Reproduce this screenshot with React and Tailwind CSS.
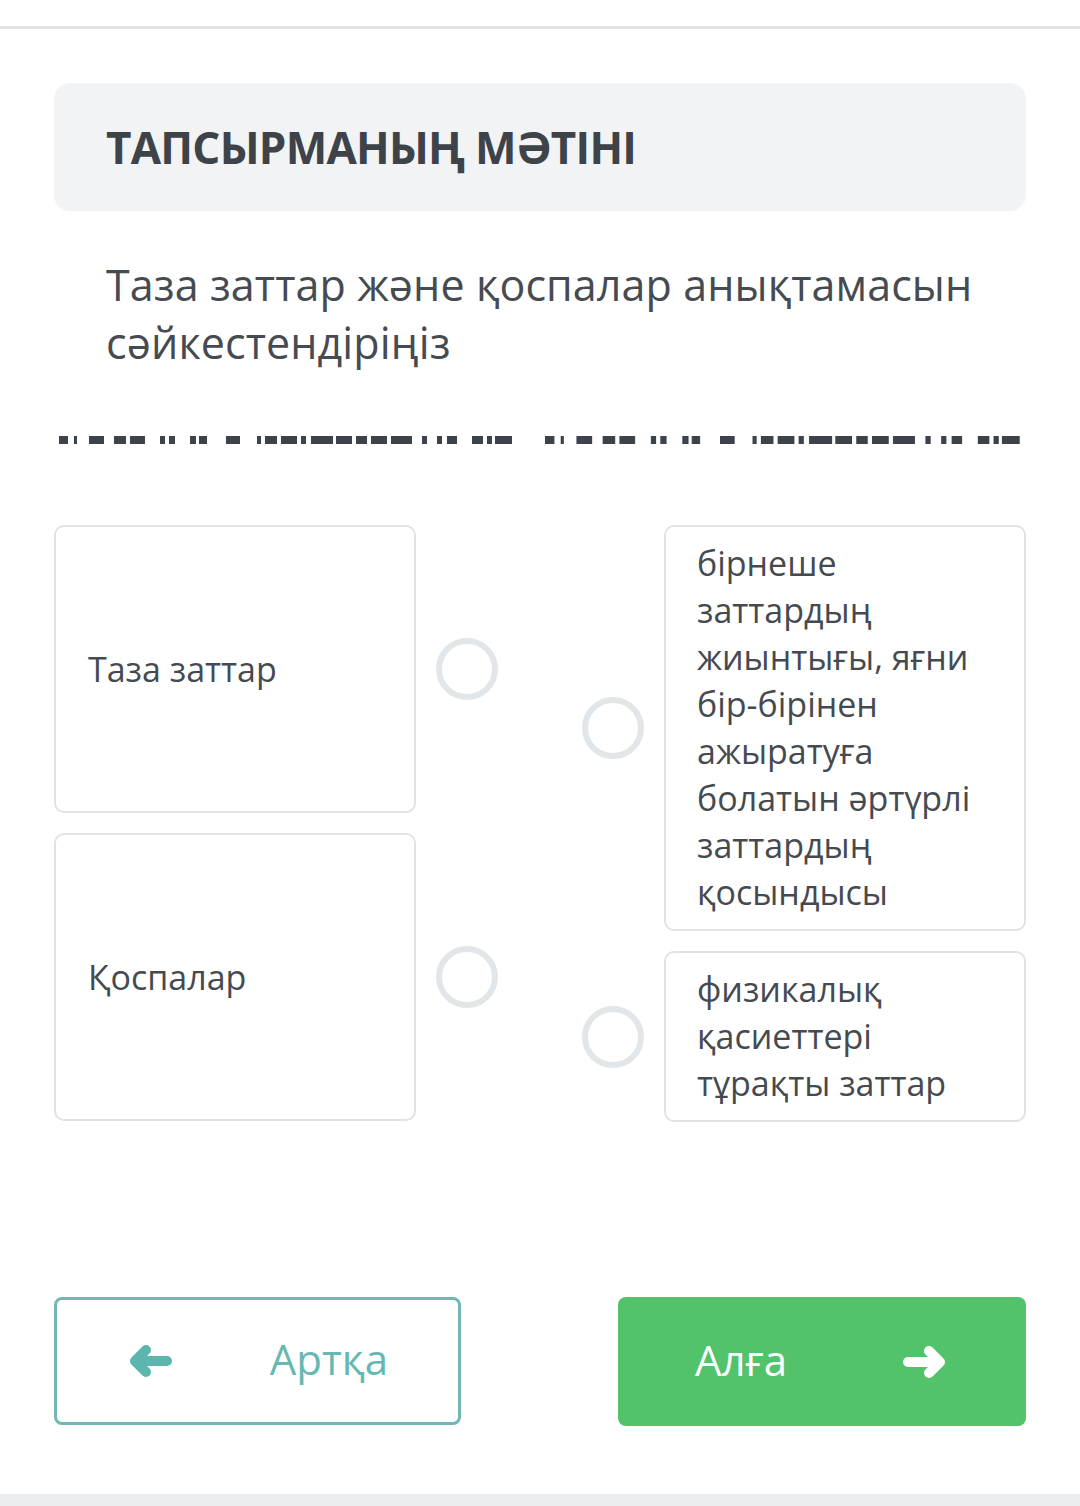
import React from 'react'

const dashes = [
  [59, 9], [74, 3], [89, 15], [114, 12], [130, 15], [160, 5], [169, 6], [190, 6], [199, 8],
  [226, 14], [257, 4], [265, 12], [281, 16], [301, 5], [311, 22], [336, 16], [356, 11],
  [371, 16], [391, 21], [422, 5], [437, 5], [447, 10], [472, 11], [487, 5], [495, 17],
]

function DashLine() {
  return (
    <svg width="1080" height="8" viewBox="0 0 1080 8" className="block">
      {dashes.map(([x, w], i) => (
        <rect key={'a' + i} x={x} y="0" width={w} height="8" fill="#3d434a" />
      ))}
      {dashes.map(([x, w], i) => (
        <rect key={'b' + i} x={545 + (x - 59) * 1.048} y="0" width={w * 1.048} height="8" fill="#3d434a" />
      ))}
    </svg>
  )
}

function Arrow({ color, flip }) {
  return (
    <svg width="44" height="34" viewBox="0 0 44 34" className={flip ? 'scale-x-[-1]' : ''}>
      <path
        d="M6 17 H38 M6 17 L17 6 M6 17 L17 28"
        fill="none"
        stroke={color}
        strokeWidth="10"
        strokeLinecap="round"
        strokeLinejoin="round"
      />
    </svg>
  )
}

function Circle() {
  return <div className="w-[62px] h-[62px] shrink-0 rounded-full border-[6px] border-[#e2e6e9]" />
}

export default function App() {
  return (
    <div className="w-[1080px] min-h-[1506px] bg-white font-['Open_Sans',sans-serif] flex flex-col">
      <div className="h-[26px] bg-white" />
      <div className="h-[3px] bg-[#e2e2e2]" />

      <div className="px-[54px]">
        <div className="mt-[54px] h-[128px] rounded-2xl bg-[#f2f3f5] flex items-center pl-[52px]">
          <h1 className="text-[44px] font-bold text-[#3e434a] leading-none tracking-[-0.75px]">
            ТАПСЫРМАНЫҢ МӘТІНІ
          </h1>
        </div>

        <p className="mt-[45px] pl-[52px] text-[43px] leading-[58px] text-[#464b52] tracking-[0.1px]">
          Таза заттар және қоспалар анықтамасын сәйкестендіріңіз
        </p>
      </div>

      <div className="mt-[64px]">
        <DashLine />
      </div>

      <div className="px-[54px] mt-[81px] flex justify-between items-start">
        <div className="flex flex-col gap-5">
          <div className="flex items-center gap-5">
            <div className="w-[362px] h-[288px] rounded-[10px] border-2 border-[#e0e3e6] flex items-center pl-8 text-[34px] text-[#454a51]">
              Таза заттар
            </div>
            <Circle />
          </div>
          <div className="flex items-center gap-5">
            <div className="w-[362px] h-[288px] rounded-[10px] border-2 border-[#e0e3e6] flex items-center pl-8 text-[34px] text-[#454a51]">
              Қоспалар
            </div>
            <Circle />
          </div>
        </div>

        <div className="flex flex-col gap-5">
          <div className="flex items-center gap-5">
            <Circle />
            <div className="w-[362px] rounded-[10px] border-2 border-[#e0e3e6] pl-[31px] pr-[28px] py-[13px] text-[34px] leading-[47px] text-[#454a51]">
              бірнеше заттардың жиынтығы, яғни бір-бірінен ажыратуға болатын әртүрлі заттардың қосындысы
            </div>
          </div>
          <div className="flex items-center gap-5">
            <Circle />
            <div className="w-[362px] rounded-[10px] border-2 border-[#e0e3e6] pl-[31px] pr-[28px] py-[13px] text-[34px] leading-[47px] text-[#454a51]">
              физикалық қасиеттері тұрақты заттар
            </div>
          </div>
        </div>
      </div>

      <div className="px-[54px] mt-[175px] flex justify-between">
        <button className="w-[407px] h-[128px] rounded-lg border-[3px] border-[#72b6b6] flex items-center justify-between pl-[72px] pr-[70px] bg-white">
          <Arrow color="#5db6ae" />
          <span className="text-[42px] leading-none pb-[4px] text-[#66b8b2]">Артқа</span>
        </button>
        <button className="w-[408px] h-[129px] rounded-lg bg-[#52c26b] flex items-center justify-between pl-[77px] pr-[80px]">
          <span className="text-[42px] leading-none pb-[4px] text-white">Алға</span>
          <Arrow color="#ffffff" flip />
        </button>
      </div>

      <div className="mt-auto h-[12px] bg-[#ebedf0]" />
    </div>
  )
}
